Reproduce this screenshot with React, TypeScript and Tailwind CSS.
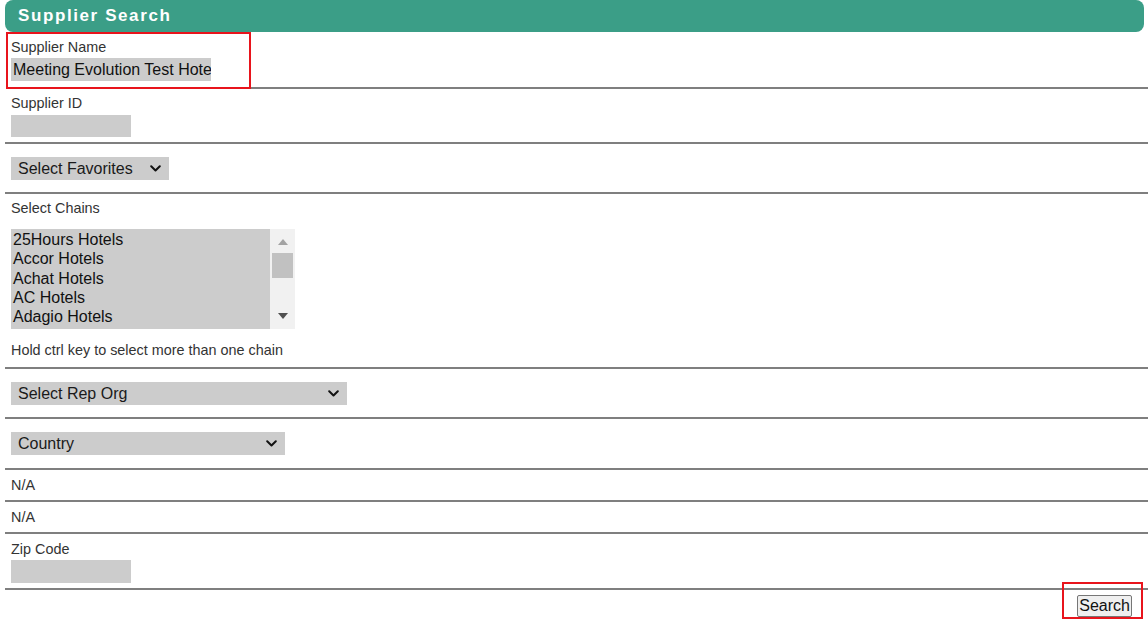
import React from 'react';

const font = { fontFamily: '"Liberation Sans", Arial, sans-serif' };

const Chevron: React.FC = () => (
  <svg width="11" height="7" viewBox="0 0 11 7" className="shrink-0">
    <path d="M1.2 1.2 L5.5 5.5 L9.8 1.2" fill="none" stroke="#111" strokeWidth="2" strokeLinecap="round" strokeLinejoin="round" />
  </svg>
);

const FakeSelect: React.FC<{ label: string; width: string }> = ({ label, width }) => (
  <div className={`${width} h-[23px] bg-[#cccccc] flex items-center justify-between pl-[7px] pr-[8px]`}>
    <span className="text-[16px] leading-[23px] text-[#1a1a1a]">{label}</span>
    <Chevron />
  </div>
);

const Row: React.FC<{ className?: string; children: React.ReactNode }> = ({ className = '', children }) => (
  <div className={`border-b-2 border-[#7f7f7f] pl-[6px] ${className}`}>{children}</div>
);

const Label: React.FC<{ children: React.ReactNode; className?: string }> = ({ children, className = '' }) => (
  <div className={`text-[14.4px] leading-[16px] text-[#333] ${className}`}>{children}</div>
);

const chains = ['25Hours Hotels', 'Accor Hotels', 'Achat Hotels', 'AC Hotels', 'Adagio Hotels', 'Adriatic Luxury Hotels'];

export default function App() {
  return (
    <div className="w-[1148px] h-[621px] overflow-hidden bg-white pl-[5px]" style={font}>
      {/* header */}
      <div className="h-[32px] mr-[4px] rounded-[8px] bg-[#3b9e87] flex items-center pl-[13px]">
        <span className="text-white font-bold text-[17px] tracking-[1.6px]">Supplier Search</span>
      </div>

      {/* supplier name */}
      <div className="flex">
        <div className="w-[245px] h-[57px] border-2 border-[#e8141c] pl-[3px] pt-[5px] shrink-0 ml-[1px]">
          <Label>Supplier Name</Label>
          <div className="mt-[3px] w-[200px] h-[23px] bg-[#cccccc] pl-[2px] overflow-hidden whitespace-nowrap text-[16px] leading-[23px] text-[#111]">
            Meeting Evolution Test Hotel
          </div>
        </div>
        <div className="flex-1 border-b-2 border-[#7f7f7f]" />
      </div>

      {/* supplier id */}
      <Row className="pt-[6px] pb-[5px]">
        <Label>Supplier ID</Label>
        <div className="mt-[4px] w-[120px] h-[22px] bg-[#cccccc]" />
      </Row>

      {/* favorites */}
      <Row className="pt-[13px] pb-[12px]">
        <FakeSelect label="Select Favorites" width="w-[158px]" />
      </Row>

      {/* chains */}
      <Row className="pt-[6px] pb-[9px]">
        <Label>Select Chains</Label>
        <div className="mt-[13px] w-[284px] h-[100px] flex">
          <div className="flex-1 bg-[#cccccc] overflow-hidden pl-[2px] pt-[1px]">
            {chains.map((c) => (
              <div key={c} className="text-[16px] leading-[19.3px] text-[#111] whitespace-nowrap">
                {c}
              </div>
            ))}
          </div>
          <div className="w-[25px] bg-[#f1f1f1] flex flex-col items-center pt-[10px] pb-[10px]">
            <svg width="10" height="6" viewBox="0 0 10 6">
              <path d="M0 6 L5 0 L10 6 Z" fill="#a3a3a3" />
            </svg>
            <div className="mt-[8px] w-[21px] h-[25px] bg-[#c1c1c1]" />
            <div className="flex-1" />
            <svg width="10" height="6" viewBox="0 0 10 6">
              <path d="M0 0 L5 6 L10 0 Z" fill="#505050" />
            </svg>
          </div>
        </div>
        <Label className="mt-[13px]">Hold ctrl key to select more than one chain</Label>
      </Row>

      {/* rep org */}
      <Row className="pt-[13px] pb-[12px]">
        <FakeSelect label="Select Rep Org" width="w-[336px]" />
      </Row>

      {/* country */}
      <Row className="pt-[13px] pb-[13px]">
        <FakeSelect label="Country" width="w-[274px]" />
      </Row>

      <Row className="pt-[7px] pb-[7px]">
        <Label>N/A</Label>
      </Row>

      <Row className="pt-[7px] pb-[7px]">
        <Label>N/A</Label>
      </Row>

      {/* zip */}
      <Row className="pt-[7px] pb-[5px]">
        <Label>Zip Code</Label>
        <div className="mt-[3px] w-[120px] h-[23px] bg-[#cccccc]" />
      </Row>

      {/* footer */}
      <div className="relative flex justify-end pr-[16px] pt-[5px]">
        <button className="h-[22px] px-[1px] border border-[#767676] rounded-[2px] bg-[#efefef] text-[16px] leading-[20px] text-[#111]" style={font}>
          Search
        </button>
        <div className="absolute right-[5px] top-[-8px] w-[81px] h-[37px] border-2 border-[#e8141c]" />
      </div>
    </div>
  );
}
